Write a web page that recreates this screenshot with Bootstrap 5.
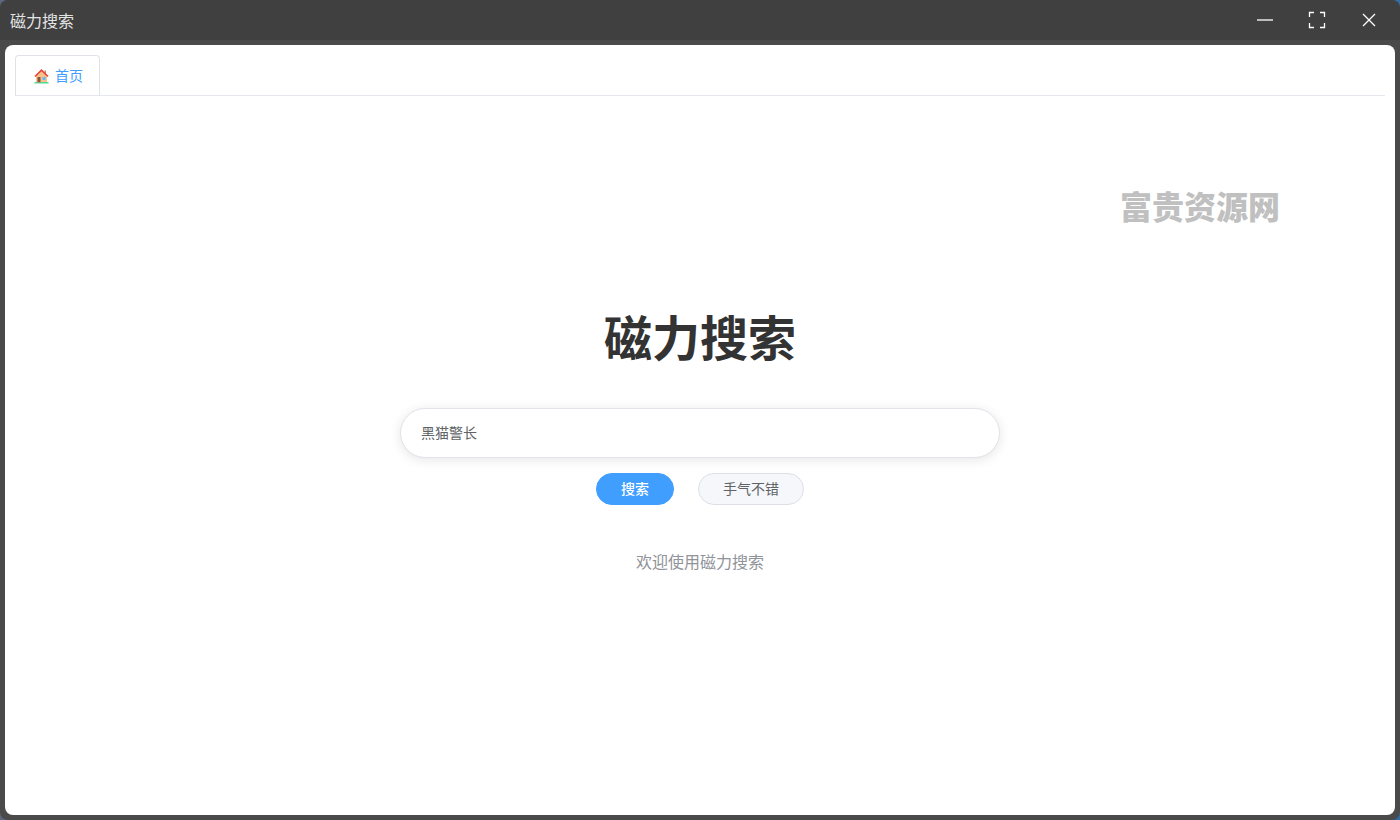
<!DOCTYPE html>
<html lang="zh-CN">
<head>
<meta charset="utf-8">
<meta name="viewport" content="width=device-width, initial-scale=1">
<title>磁力搜索</title>
<link href="https://cdn.jsdelivr.net/npm/bootstrap@5.3.0/dist/css/bootstrap.min.css" rel="stylesheet">
<style>
  body { font-family: "Liberation Sans", "Noto Sans CJK SC", sans-serif; font-size: 14px; background: linear-gradient(90deg, #5d6580 50%, #2f6fa8 50%); }
  .app-window { background: #4a4a4a; border-radius: 8px; }
  .title-bar { height: 40px; background: #404040; color: #e4e4e4; font-size: 16px; padding: 0 5px 0 10px; }
  .title-bar .app-name { padding-top: 3px; }
  .window-btn { width: 52px; height: 40px; color: #fff; }
  .frame-area { padding: 5px; }
  .page-panel { border-radius: 8px; padding: 10px; }
  .page-tabs { --bs-nav-tabs-border-color: #e4e7ed; }
  .page-tabs .nav-link, .page-tabs .nav-link.active { color: #409eff; border-color: #dfe2e8 #dfe2e8 #e4e7ed; }
  .page-tabs .nav-link { height: 41px; padding: 2px 16px 0 18px; gap: 6px; border-radius: 4px 4px 0 0; }
  .brand-mark { color: #c0c0c0; font-size: 32px; line-height: 32px; font-weight: 900; padding: 96px 105px 0 0; }
  .hero { padding-top: 80px; }
  .hero-title { font-size: 48px; line-height: 72px; font-weight: 700; color: #333; margin-bottom: 32px; }
  .search-form { max-width: 600px; }
  .search-input { height: 50px; padding: 0 20px 2px; font-size: 14px; color: #606266; border-color: #e2e4ea; border-radius: 25px; box-shadow: 0 2px 12px rgba(0,0,0,.1); }
  .search-input:focus { color: #606266; }
  .action-row { gap: 24px; margin-top: 15px; }
  .pill-btn { height: 32px; padding: 0 24px; font-size: 14px; line-height: 30px; }
  .pill-main { --bs-btn-bg: #409eff; --bs-btn-border-color: #409eff; --bs-btn-color: #fff; --bs-btn-hover-bg: #66b1ff; --bs-btn-hover-color: #fff; --bs-btn-font-weight: 500; }
  .pill-plain { --bs-btn-bg: #f5f7fa; --bs-btn-border-color: #dcdfe6; --bs-btn-color: #606266; --bs-btn-hover-bg: #ecf5ff; --bs-btn-hover-color: #409eff; }
  .welcome { font-size: 16px; line-height: 24px; color: #909399; margin-top: 46px; }
</style>
</head>
<body>
<div class="app-window d-flex flex-column min-vh-100 overflow-hidden">
  <header class="title-bar d-flex align-items-center justify-content-between">
    <span class="app-name">磁力搜索</span>
    <div class="d-flex">
      <button type="button" class="window-btn btn p-0 border-0 d-flex align-items-center justify-content-center" aria-label="最小化">
        <svg width="18" height="18" viewBox="0 0 18 18"><path d="M1 8h16v2H1z" fill="#bdbdbd"/></svg>
      </button>
      <button type="button" class="window-btn btn p-0 border-0 d-flex align-items-center justify-content-center" aria-label="最大化">
        <svg width="18" height="18" viewBox="0 0 18 18" fill="none" stroke="currentColor"><path d="M1.500 6V1.500H6M12 1.500h4.500V6M16.500 12v4.500H12M6 16.500H1.500V12" stroke-width="1.300"/></svg>
      </button>
      <button type="button" class="window-btn btn p-0 border-0 d-flex align-items-center justify-content-center" aria-label="关闭">
        <svg width="18" height="18" viewBox="0 0 18 18" fill="none" stroke="currentColor"><path d="M3 3l12 12M15 3L3 15" stroke-width="1.300"/></svg>
      </button>
    </div>
  </header>
  <div class="frame-area d-flex flex-grow-1">
    <div class="page-panel bg-white flex-grow-1">
      <ul class="page-tabs nav nav-tabs">
        <li class="nav-item">
          <a class="nav-link active d-flex align-items-center" href="#" aria-current="page">
            <svg width="15" height="15" viewBox="0 0 15 15" aria-hidden="true">
              <path d="M10.500 1.500h1.500v4h-1.500z" fill="#c98a5a"/>
              <path d="M2 7l5.500-5.500L13 7v7H2z" fill="#f7c38b"/>
              <path d="M3.500 8h3v6h-3z" fill="#8a5340"/>
              <path d="M8.500 8h3v3h-3z" fill="#68b8f0"/>
              <path d="M1 7.500L7.500 1.200 14 7.500" fill="none" stroke="#e8433c" stroke-width="1.600"/>
              <path d="M.5 13h14v1.500H.5z" fill="#4fdc8c"/>
              <path d="M3.500 13h3v1h-3z" fill="#9aa08a"/>
            </svg>
            <span>首页</span>
          </a>
        </li>
      </ul>
      <div class="brand-mark text-end">富贵资源网</div>
      <main class="hero d-flex flex-column align-items-center text-center">
        <h1 class="hero-title">磁力搜索</h1>
        <form class="search-form w-100" onsubmit="return false">
          <input type="text" class="search-input form-control" value="黑猫警长" aria-label="搜索关键词">
          <div class="action-row d-flex justify-content-center">
            <button type="submit" class="pill-btn pill-main btn rounded-pill">搜索</button>
            <button type="button" class="pill-btn pill-plain btn rounded-pill">手气不错</button>
          </div>
        </form>
        <p class="welcome mb-0">欢迎使用磁力搜索</p>
      </main>
    </div>
  </div>
</div>
<script src="https://cdn.jsdelivr.net/npm/bootstrap@5.3.0/dist/js/bootstrap.bundle.min.js"></script>
</body>
</html>
